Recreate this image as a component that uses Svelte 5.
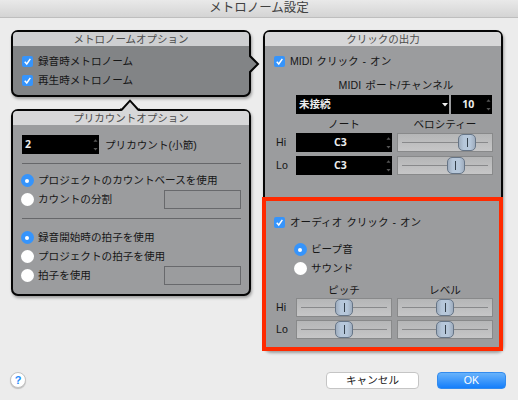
<script>
  let recording = $state(true);
  let playback = $state(true);
  let midi = $state(true);
  let audio = $state(true);
  let base = $state(0);
  let signature = $state(0);
  let sound = $state(0);
</script>

{#snippet check(on, label, toggle)}
  <button class="option" role="checkbox" aria-checked={on} onclick={toggle}>
    <span class="mark"><span class="box" class:on>
      {#if on}<svg viewBox="0 0 12 12"><path d="M3 6.2 5.2 8.7 9.1 3.2" /></svg>{/if}
    </span></span>
    <span class="label">{label}</span>
  </button>
{/snippet}

{#snippet radio(on, label, pick)}
  <button class="option" role="radio" aria-checked={on} onclick={pick}>
    <span class="mark"><span class="dot" class:on></span></span>
    <span class="label">{label}</span>
  </button>
{/snippet}

{#snippet spin()}
  <svg class="spin" viewBox="0 0 6 15"><path d="M.5 3.5 3 .5 5.5 3.5ZM.5 11 3 14 5.5 11Z" /></svg>
{/snippet}

{#snippet slider(value)}
  <div class="slider"><span class="track"></span><span class="knob" style:left="{value}px"></span></div>
{/snippet}

<main>
  <header class="title">メトロノーム設定</header>
  <div class="panels">
    <div class="left">
      <section class="panel metronome">
        <h2>メトロノームオプション</h2>
        <div class="options">
          {@render check(recording, '録音時メトロノーム', () => (recording = !recording))}
          {@render check(playback, '再生時メトロノーム', () => (playback = !playback))}
        </div>
        <svg class="arrow right" viewBox="0 0 11 20"><path class="fill" d="M0 1.5V18.5L9 10Z" /><path class="edge" d="M1 0V2L9 10 1 18V20" /></svg>
      </section>
      <section class="panel precount">
        <h2>プリカウントオプション</h2>
        <div class="count">
          <div class="field"><span>2</span>{@render spin()}</div>
          <span class="label">プリカウント(小節)</span>
        </div>
        <hr />
        <div class="group first">
          {@render radio(base === 0, 'プロジェクトのカウントベースを使用', () => (base = 0))}
          <div class="split">{@render radio(base === 1, 'カウントの分割', () => (base = 1))}<div class="blank"></div></div>
        </div>
        <hr />
        <div class="group second">
          {@render radio(signature === 0, '録音開始時の拍子を使用', () => (signature = 0))}
          {@render radio(signature === 1, 'プロジェクトの拍子を使用', () => (signature = 1))}
          <div class="split">{@render radio(signature === 2, '拍子を使用', () => (signature = 2))}<div class="blank"></div></div>
        </div>
        <svg class="arrow up" viewBox="0 0 20 12"><path class="fill" d="M1.5 12 10 2.5 18.5 12Z" /><path class="edge" d="M0 10.5H2L10 1.7 18 10.5H20" /></svg>
      </section>
    </div>

    <section class="panel output">
      <h2>クリックの出力</h2>
      <div class="midi">
        {@render check(midi, 'MIDI クリック - オン', () => (midi = !midi))}
        <div class="port-label">MIDI ポート/チャンネル</div>
        <div class="ports">
          <div class="field port"><span>未接続</span><svg class="drop" viewBox="0 0 6 4"><path d="M0 0H6L3 3.5Z" /></svg></div>
          <div class="field channel"><span>10</span>{@render spin()}</div>
        </div>
        <div class="matrix notes">
          <span></span><span class="head">ノート</span><span class="head">ベロシティー</span>
          <span class="side">Hi</span><div class="field note"><span>C3</span>{@render spin()}</div>{@render slider(69)}
          <span class="side">Lo</span><div class="field note"><span>C3</span>{@render spin()}</div>{@render slider(57.5)}
        </div>
      </div>
      <div class="audio">
        {@render check(audio, 'オーディオ クリック - オン', () => (audio = !audio))}
        <div class="sounds">
          {@render radio(sound === 0, 'ビープ音', () => (sound = 0))}
          {@render radio(sound === 1, 'サウンド', () => (sound = 1))}
        </div>
        <div class="matrix levels">
          <span></span><span class="head">ピッチ</span><span class="head">レベル</span>
          <span class="side">Hi</span>{@render slider(47)}{@render slider(47)}
          <span class="side">Lo</span>{@render slider(47)}{@render slider(47)}
        </div>
      </div>
    </section>
  </div>
  <footer>
    <button class="help" aria-label="?">?</button>
    <button class="action cancel">キャンセル</button>
    <button class="action ok">OK</button>
  </footer>
</main>

<style>
  :global(body) { margin: 0; overflow: hidden; }
  main, main * { box-sizing: border-box; }
  main { width: 518px; height: 400px; display: flex; flex-direction: column; background: #ececec; color: #161616; font: 10.6px/14px "Liberation Sans", "Noto Sans CJK JP", sans-serif; white-space: nowrap; }
  button { padding: 0; border: 0; background: none; font: inherit; color: inherit; }
  .title { flex: 0 0 18px; text-align: center; font-size: 12.5px; line-height: 17px; color: #414141; background: linear-gradient(#e9e9e9, #d4d4d4); border-bottom: 1px solid #bebebe; }
  .panels { display: flex; gap: 12px; padding: 12px 15px 0 11px; height: 346px; }
  .left { display: flex; flex-direction: column; gap: 12px; width: 240px; }
  .panel { position: relative; border: 2px solid #050505; border-radius: 7px; background: #9b9c9e; box-shadow: 1px 2px 3px #0005; }
  h2 { margin: 0; height: 14px; border-radius: 4px 4px 0 0; background: #d7d7d8; text-align: center; font-size: 10.5px; font-weight: 400; line-height: 14px; color: #4d4d4d; }
  .metronome { height: 67px; background: #828486; }
  .metronome h2 { background: #cecfd1; }
  .precount { height: 187px; }
  .output { width: 240px; height: 321px; }
  .arrow { position: absolute; overflow: visible; }
  .arrow.right { width: 11px; height: 20px; left: 236px; top: 22px; }
  .arrow.up { width: 20px; height: 12px; left: 107px; top: -12px; }
  .edge { fill: none; stroke: #050505; stroke-width: 2; }
  .metronome .fill { fill: #828486; }
  .precount .fill { fill: #d7d7d8; }
  .options { padding: 6px 0 0 7px; }
  .option { display: flex; align-items: center; height: 19.2px; text-align: left; word-spacing: 1px; }
  .mark { width: 14px; height: 14px; display: grid; place-items: center; margin-right: 4px; }
  .option .label { position: relative; top: -1px; }
  .box { width: 11px; height: 11px; border-radius: 2px; background: white; display: block; }
  .box.on { background: #3694fb; }
  .box svg { display: block; width: 11px; height: 11px; fill: none; stroke: white; stroke-width: 1.6; }
  .dot { width: 13px; height: 13px; border-radius: 50%; background: white; display: grid; place-items: center; }
  .dot.on { background: #3694fb; }
  .dot.on::after { content: ""; width: 4px; height: 4px; border-radius: 50%; background: white; }
  .count { display: flex; align-items: center; gap: 6px; padding: 10px 0 0 9px; }
  .field { height: 19px; display: flex; align-items: center; justify-content: space-between; background: #000; color: #ededed; font: bold 10.5px/19px "Open Sans", "Noto Sans CJK JP", sans-serif; padding: 0 1px 0 3px; }
  .count .field { width: 77px; }
  .spin { width: 5px; height: 14px; fill: #555; flex: none; }
  hr { width: 219px; height: 1px; border: 0; background: #66676a; margin: 9px 0 0 9px; }
  .group { padding-left: 7px; }
  .group.first { height: 45px; padding-top: 7px; }
  .group.second { padding-top: 9px; }
  .split { display: flex; justify-content: space-between; align-items: center; padding-right: 8px; height: 19px; }
  .blank { width: 77px; height: 19px; border: 1px solid #68696c; }
  .midi { height: 151px; padding: 6px 9px 0 7px; }
  .port-label { height: 24px; line-height: 29px; text-align: center; padding-left: 28px; word-spacing: 1px; letter-spacing: .1px; }
  .ports { display: flex; gap: 2px; padding-left: 24px; }
  .port { width: 154px; }
  .channel { width: 41px; padding-left: 11px; }
  .drop { width: 6px; height: 4px; fill: #eee; }
  .matrix { display: grid; grid-template-columns: 19px 96px 96px; column-gap: 5px; }
  .notes { grid-template-rows: 19px 23px 23px; }
  .head { text-align: center; }
  .side { line-height: 19px; padding-left: 4px; }
  .notes .head { line-height: 20px; }
  .note { padding-left: 38px; }
  .slider { position: relative; width: 96px; height: 19px; border: 1px solid #88898a; background: linear-gradient(#b5b6b7, #c6c6c7); }
  .track { position: absolute; left: 4px; right: 4px; top: 8px; height: 1px; background: #88898b; }
  .knob { position: absolute; top: 0; width: 18px; height: 17px; margin-left: -9px; border: 1px solid #667587; border-radius: 5px; background: linear-gradient(90deg, #9fadbe, #b6c7da 30%, #b6c7da 70%, #9fadbe); }
  .knob::after { content: ""; position: absolute; left: 7.5px; top: 3px; width: 1px; height: 9px; background: #34404b; }
  .audio { position: relative; width: 241px; height: 154px; margin-left: -3px; border: 4px solid #ff2a00; padding: 12px 0 0 6px; }
  .sounds { padding: 8px 0 0 21px; }
  .levels { grid-template-rows: 18px 22px 22px; margin-top: 1px; }
  .levels .head { line-height: 21px; }
  footer { display: flex; align-items: center; padding: 7px 12px 0 10px; height: 25px; }
  .help { width: 16px; height: 16px; border-radius: 50%; background: #fff; border: .5px solid #c4c4c4; box-shadow: 0 1px 1px #0003; color: #238afa; font: bold 11px/15px "Liberation Sans", sans-serif; }
  .action { height: 17px; border-radius: 4px; font-size: 10.6px; line-height: 15px; }
  .cancel { width: 93px; margin-left: auto; background: #fff; border: 1px solid #c5c5c5; }
  .ok { width: 69px; margin-left: 18px; color: white; background: linear-gradient(#68b3fb, #147efb); border: 1px solid #328bee; }
</style>
